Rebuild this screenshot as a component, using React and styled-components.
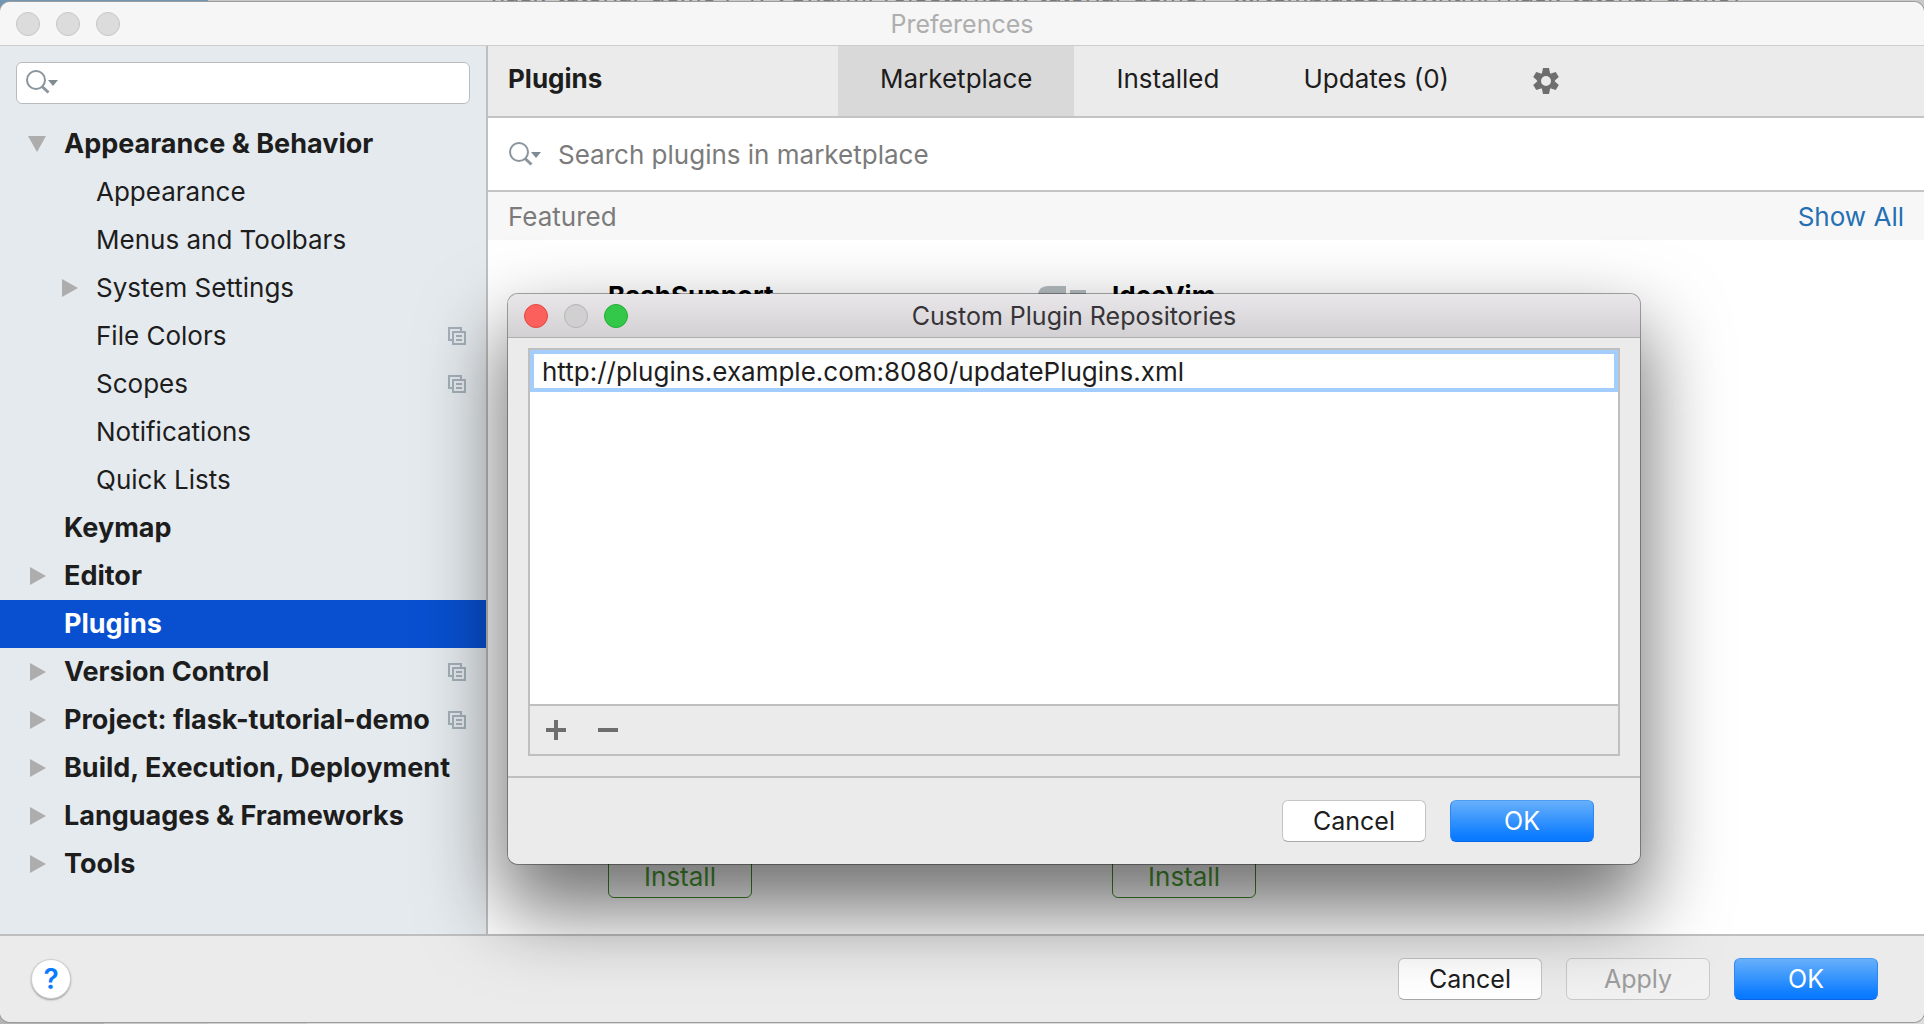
import React from "react";
import styled, { createGlobalStyle, css } from "styled-components";

const Global = createGlobalStyle`
  * { box-sizing: border-box; }
  body { margin: 0; background: #d6d6d6; }
  body, button, input { font-family: Inter, Roboto, "Liberation Sans", sans-serif; font-size: 26px; line-height: 32px; color: #1d1d1d; }
  h1, h2, h3, ul { margin: 0; padding: 0; font-size: 26px; list-style: none; }
  button { cursor: default; }
`;

const Desktop = styled.div`
  position: relative;
  display: flex;
  flex-direction: column;
  height: 100vh;
  overflow: hidden;
  background: #d0d0d0;
`;
const Behind = styled.div`
  position: absolute;
  left: 0;
  right: 0;
  height: 40px;
  overflow: hidden;
`;
const BehindTop = styled(Behind)`
  top: 0;
  background: linear-gradient(90deg, #6f96b4 0 208px, #c9c9c8 208px);
`;
const BehindTitle = styled.div`
  margin: -23px 0 0 490px;
  font-size: 25px;
  line-height: 32px;
  color: #777;
  white-space: nowrap;
`;
const BehindBottom = styled(Behind)`
  bottom: 0;
  background: linear-gradient(90deg, #b5b3b3 0 104px, #c9c7c7 104px 208px, #cfcfcf 208px 307px, #dcdcdc 307px);
`;

const Window = styled.main`
  position: relative;
  flex: 1;
  display: flex;
  flex-direction: column;
  min-height: 0;
  margin: 2px 0;
  border-radius: 10px;
  overflow: hidden;
  background: #ebebeb;
  box-shadow: 0 0 0 1px #9c9c9c;
`;
const TitleBar = styled.header`
  flex: none;
  display: grid;
  grid-template-columns: 1fr auto 1fr;
  align-items: center;
  height: 44px;
  padding: 0 16px;
  background: ${(p) => (p.$active ? "linear-gradient(#eae7ea, #d2d0d2)" : "#f6f6f6")};
  border-bottom: 1px solid ${(p) => (p.$active ? "#b0aeb0" : "#cdcdcd")};
  h1, h2 { font-size: 25px; font-weight: 400; color: ${(p) => (p.$active ? "#363438" : "#aeaeae")}; }
`;
const Lights = styled.div`
  display: flex;
  gap: 16px;
`;
const Light = styled.button`
  width: 24px;
  height: 24px;
  padding: 0;
  border-radius: 50%;
  background: ${(p) => p.$fill};
  border: 1px solid ${(p) => p.$edge};
`;
const Body = styled.div`
  flex: 1;
  display: flex;
  min-height: 0;
`;

const Sidebar = styled.nav`
  flex: none;
  width: 488px;
  padding-top: 16px;
  background: #e5eaee;
  border-right: 2px solid #bfbfbf;
`;
const TreeSearch = styled.label`
  display: flex;
  align-items: center;
  gap: 8px;
  height: 42px;
  margin: 0 16px 16px;
  padding: 0 8px;
  background: #fff;
  border: 1px solid #b9bcbf;
  border-radius: 6px;
`;
const BareInput = styled.input`
  flex: 1;
  min-width: 0;
  padding: 0;
  border: 0;
  outline: 0;
  background: transparent;
  &::placeholder { color: #7b7b7b; opacity: 1; }
`;
const Row = styled.li`
  display: flex;
  align-items: center;
  height: 48px;
  padding: 0 20px 0 ${(p) => (p.$child ? 60 : 28)}px;
  white-space: nowrap;
  font-size: ${(p) => (p.$child ? 26 : 27)}px;
  font-weight: ${(p) => (p.$child ? 400 : 700)};
  ${(p) => p.$selected && css`background: #0850d0; color: #fff;`}
`;
const Arrow = styled.span`
  flex: none;
  display: flex;
  width: 20px;
  margin-right: 16px;
`;
const RowText = styled.span`
  flex: 1;
`;

const Content = styled.section`
  flex: 1;
  display: flex;
  flex-direction: column;
  min-width: 0;
  background: #fff;
`;
const TabBar = styled.div`
  flex: none;
  display: flex;
  height: 72px;
  background: #ebebeb;
  border-bottom: 2px solid #c4c4c4;
`;
const TabTitle = styled.h2`
  flex: none;
  width: 350px;
  padding: 17px 20px;
  font-weight: 700;
`;
const Tab = styled.button`
  flex: none;
  display: flex;
  align-items: center;
  padding: 0 42px ${(p) => (p.$icon ? 0 : 4)}px;
  border: 0;
  background: ${(p) => (p.$active ? "#d9d9d9" : "transparent")};
`;
const MarketSearch = styled.label`
  flex: none;
  display: flex;
  align-items: center;
  gap: 16px;
  height: 74px;
  padding: 2px 20px 0;
  border-bottom: 2px solid #c4c4c4;
`;
const SectionHead = styled.div`
  flex: none;
  display: flex;
  align-items: center;
  justify-content: space-between;
  height: 48px;
  padding: 2px 20px 0;
  background: #f7f7f7;
  h3 { font-weight: 400; color: #7b7b7b; }
  a { color: #2470b3; text-decoration: none; }
`;
const Cards = styled.div`
  display: grid;
  grid-template-columns: 504px 504px;
  padding-top: 40px;
`;
const Card = styled.article`
  display: grid;
  grid-template-columns: 80px 1fr;
  column-gap: 20px;
  align-content: space-between;
  height: 618px;
  padding-left: 20px;
  h3 { font-weight: 700; color: #000; }
  button { grid-column: 2; }
`;
const CardIcon = styled.div`
  display: flex;
  justify-content: flex-end;
  padding: 6px 4px 0 0;
  height: 32px;
`;
const InstallButton = styled.button`
  width: 144px;
  height: 42px;
  border: 1px solid #3d8b26;
  border-radius: 6px;
  background: transparent;
  color: #4a9a33;
`;

const Footer = styled.footer`
  flex: none;
  display: flex;
  align-items: center;
  justify-content: flex-end;
  gap: 24px;
  height: 88px;
  padding: 0 46px 0 31px;
  background: #ebebeb;
  border-top: 2px solid #bfbfbf;
`;
const HelpButton = styled.button`
  width: 40px;
  height: 40px;
  margin-right: auto;
  padding: 0;
  border: 1px solid #cfcfcf;
  border-radius: 50%;
  background: #fff;
  color: #0a7bff;
  font-weight: 600;
  font-size: 28px;
  box-shadow: 0 1px 2px #0005;
`;
const PushButton = styled.button`
  width: 144px;
  height: 42px;
  padding: 0;
  border: 1px solid #c4c4c4;
  border-bottom-color: #a8a8a8;
  border-radius: 6px;
  background: #fff;
  font-size: 25px;
  ${(p) => p.$primary && css`
    color: #fff;
    border-color: #4a9cf5 #2a86f5 #0a64e6;
    background: linear-gradient(#67b0fb, #0a7bff 90%);
  `}
  &:disabled { color: #9d9d9d; background: #f1f1f1; border-color: #c9c9c9; }
`;

const Dialog = styled.section`
  position: absolute;
  top: 292px;
  left: 508px;
  width: 1132px;
  display: flex;
  flex-direction: column;
  border-radius: 10px;
  background: #ebebeb;
  box-shadow: 0 0 0 1px #0005, 0 40px 80px 6px rgba(0, 0, 0, 0.56);
  overflow: hidden;
`;
const RepoPanel = styled.div`
  margin: 10px 20px 20px;
  border: 2px solid #bfbfbf;
`;
const RepoList = styled.div`
  height: 354px;
  background: #fff;
`;
const RepoInput = styled.input`
  display: block;
  width: 100%;
  height: 42px;
  padding: 0 8px;
  border: 4px solid #a3cdfc;
  border-radius: 0;
  outline: 0;
  background: #fff;
`;
const RepoTools = styled.div`
  display: flex;
  gap: 20px;
  height: 50px;
  padding: 0 10px;
  border-top: 2px solid #bfbfbf;
`;
const ToolButton = styled.button`
  display: grid;
  place-items: center;
  width: 32px;
  padding: 0;
  border: 0;
  background: transparent;
`;

const SearchIcon = () => (
  <svg width="34" height="26" viewBox="0 0 34 26" fill="none" aria-hidden="true">
    <circle cx="11" cy="10" r="9" stroke="#8a959d" strokeWidth="2" />
    <path d="M17 16.500l6.500 6" stroke="#8a959d" strokeWidth="3" />
    <path d="M23 10h10l-5 6z" fill="#7f8b93" />
  </svg>
);
const ArrowIcon = ({ open }) => (
  <svg width="18" height="18" viewBox="0 0 18 18" aria-hidden="true">
    <path d={open ? "M0 1h18L9 17z" : "M2 0v18l16-9z"} fill="#adadad" />
  </svg>
);
const CopyIcon = () => (
  <svg width="18" height="18" viewBox="0 0 18 18" fill="none" stroke="#a4b0b8" strokeWidth="2" aria-hidden="true">
    <path d="M4 13H1V1h12v3M5 5h12v12H5zM8 9h6M8 13h6" />
  </svg>
);
const teeth = [0, 60, 120, 180, 240, 300];
const GearIcon = () => (
  <svg width="26" height="26" viewBox="-13 -13 26 26" aria-hidden="true">
    <circle r="7" fill="none" stroke="#6e6e6e" strokeWidth="4" />
    {teeth.map((a) => (
      <path key={a} d="M-3 -13h6l1 5h-8z" fill="#6e6e6e" transform={`rotate(${a})`} />
    ))}
  </svg>
);
const VimIcon = () => (
  <svg width="50" height="26" viewBox="0 0 50 26" fill="#b4bcc0" aria-hidden="true">
    <path d="M0 26V10Q0 0 10 0h18v26zM32 4h16v22H32z" />
  </svg>
);

const tree = [
  { name: "Appearance & Behavior", arrow: "open" },
  { name: "Appearance", child: true },
  { name: "Menus and Toolbars", child: true },
  { name: "System Settings", child: true, arrow: "closed" },
  { name: "File Colors", child: true, copy: true },
  { name: "Scopes", child: true, copy: true },
  { name: "Notifications", child: true },
  { name: "Quick Lists", child: true },
  { name: "Keymap" },
  { name: "Editor", arrow: "closed" },
  { name: "Plugins", selected: true },
  { name: "Version Control", arrow: "closed", copy: true },
  { name: "Project: flask-tutorial-demo", arrow: "closed", copy: true },
  { name: "Build, Execution, Deployment", arrow: "closed" },
  { name: "Languages & Frameworks", arrow: "closed" },
  { name: "Tools", arrow: "closed" },
];

const gray = { $fill: "#dcdcdc", $edge: "#c6c6c6" };

export default function App() {
  return (
    <Desktop>
      <Global />
      <BehindTop aria-hidden="true">
        <BehindTitle>flask-tutorial-demo [~/PyCharmProjects/flask-tutorial-demo] - .../templates/city.html [flask-tutorial-demo]</BehindTitle>
      </BehindTop>
      <BehindBottom />
      <Window>
        <TitleBar>
          <Lights>
            <Light aria-label="Close" {...gray} />
            <Light aria-label="Minimize" {...gray} />
            <Light aria-label="Zoom" {...gray} />
          </Lights>
          <h1>Preferences</h1>
        </TitleBar>
        <Body>
          <Sidebar>
            <TreeSearch>
              <SearchIcon />
              <BareInput aria-label="Search settings" />
            </TreeSearch>
            <ul>
              {tree.map((r) => (
                <Row key={r.name} $child={r.child} $selected={r.selected}>
                  <Arrow>{r.arrow && <ArrowIcon open={r.arrow === "open"} />}</Arrow>
                  <RowText>{r.name}</RowText>
                  {r.copy && <CopyIcon />}
                </Row>
              ))}
            </ul>
          </Sidebar>
          <Content>
            <TabBar>
              <TabTitle>Plugins</TabTitle>
              <Tab $active>Marketplace</Tab>
              <Tab>Installed</Tab>
              <Tab>Updates (0)</Tab>
              <Tab $icon aria-label="Plugin settings"><GearIcon /></Tab>
            </TabBar>
            <MarketSearch>
              <SearchIcon />
              <BareInput placeholder="Search plugins in marketplace" aria-label="Search plugins in marketplace" />
            </MarketSearch>
            <SectionHead>
              <h3>Featured</h3>
              <a href="#all">Show All</a>
            </SectionHead>
            <Cards>
              <Card>
                <CardIcon />
                <h3>BashSupport</h3>
                <InstallButton>Install</InstallButton>
              </Card>
              <Card>
                <CardIcon><VimIcon /></CardIcon>
                <h3>IdeaVim</h3>
                <InstallButton>Install</InstallButton>
              </Card>
            </Cards>
          </Content>
        </Body>
        <Footer>
          <HelpButton aria-label="Help">?</HelpButton>
          <PushButton>Cancel</PushButton>
          <PushButton disabled>Apply</PushButton>
          <PushButton $primary>OK</PushButton>
        </Footer>
        <Dialog role="dialog" aria-label="Custom Plugin Repositories">
          <TitleBar $active>
            <Lights>
              <Light aria-label="Close" $fill="#fc605c" $edge="#e2463f" />
              <Light aria-label="Minimize" $fill="#d0d0d0" $edge="#b5b3b5" />
              <Light aria-label="Zoom" $fill="#34c84a" $edge="#24ab35" />
            </Lights>
            <h2>Custom Plugin Repositories</h2>
          </TitleBar>
          <RepoPanel>
            <RepoList>
              <RepoInput aria-label="Repository URL" defaultValue="http://plugins.example.com:8080/updatePlugins.xml" />
            </RepoList>
            <RepoTools>
              <ToolButton aria-label="Add">
                <svg width="20" height="20" viewBox="0 0 20 20"><path d="M8 0h4v8h8v4h-8v8H8v-8H0V8h8z" fill="#6e6e6e" /></svg>
              </ToolButton>
              <ToolButton aria-label="Remove">
                <svg width="20" height="20" viewBox="0 0 20 20"><path d="M0 8h20v4H0z" fill="#6e6e6e" /></svg>
              </ToolButton>
            </RepoTools>
          </RepoPanel>
          <Footer>
            <PushButton>Cancel</PushButton>
            <PushButton $primary>OK</PushButton>
          </Footer>
        </Dialog>
      </Window>
    </Desktop>
  );
}
